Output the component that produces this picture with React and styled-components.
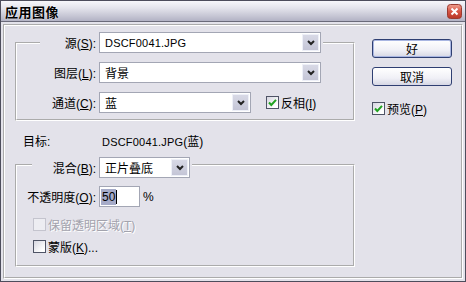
import React from 'react'
import styled, { createGlobalStyle } from 'styled-components'

const GlobalStyle = createGlobalStyle`
  html, body { margin: 0; padding: 0; background: #fff; }
  body {
    font-family: "Liberation Sans", "Noto Sans CJK SC", sans-serif;
    font-size: 12px;
    color: #000;
  }
`

const Window = styled.div`
  box-sizing: border-box;
  width: 466px;
  height: 282px;
  display: flex;
  flex-direction: column;
  background: #e3e2ea;
  border: 1px solid #4d4d5c;
`

const TitleBar = styled.div`
  height: 20px;
  flex: none;
  display: flex;
  align-items: center;
  justify-content: space-between;
  padding: 0 3px 0 4px;
  background: linear-gradient(#f7f7fb, #e4e4ec 35%, #c6c6d4 75%, #b2b2c4);
  border-bottom: 1px solid #6a6a7a;
`

const Title = styled.div`
  font-family: "Noto Sans CJK SC", sans-serif;
  font-size: 13px;
  font-weight: bold;
  letter-spacing: 0.5px;
  text-shadow: 0 0 2px #fff;
`

const Client = styled.div`
  flex: 1;
  display: flex;
  padding: 2px;
`

const Frame = styled.div`
  flex: 1;
  border: 2px groove #fff;
  display: grid;
  grid-template-columns: 340px 80px;
  column-gap: 17px;
  align-items: start;
  padding: 6px 0 0 10px;
`

const LeftCol = styled.div`
  display: flex;
  flex-direction: column;
`

const RightCol = styled.div`
  display: flex;
  flex-direction: column;
  padding-top: 7px;
`

const Group = styled.fieldset`
  box-sizing: border-box;
  width: 340px;
  margin: ${p => p.mt || 0}px 0 0 0;
  padding: ${p => p.pt}px 0 ${p => p.pb}px 0;
  min-width: 0;
  border: 2px groove #fff;
  display: flex;
  flex-direction: column;
`

const Legend = styled.legend`
  margin-left: ${p => p.ml}px;
  padding: ${p => p.pt || 0}px 2px 0 0;
  display: flex;
  align-items: center;
`

const Row = styled.div`
  display: flex;
  align-items: center;
  height: ${p => p.h || 21}px;
  margin-top: ${p => p.mt || 0}px;
  padding-left: ${p => p.pl || 0}px;
`

const Label = styled.label`
  width: ${p => p.w}px;
  margin-right: 3px;
  text-align: ${p => p.left ? 'left' : 'right'};
  white-space: nowrap;
  flex: none;
`

const Select = styled.div`
  box-sizing: border-box;
  width: ${p => p.w}px;
  height: 21px;
  flex: none;
  display: flex;
  background: #fff;
  border: 1px solid #a3a6b4;
`

const SelectValue = styled.div`
  flex: 1;
  display: flex;
  align-items: center;
  padding-left: 5px;
  white-space: nowrap;
`

const Latin = styled.span`
  font-size: 11px;
  letter-spacing: 0.2px;
`

const ArrowBtn = styled.div`
  box-sizing: border-box;
  width: 17px;
  margin: 1px;
  display: flex;
  align-items: center;
  justify-content: center;
  background: linear-gradient(#d8d9e6, #c4c5d6);
  border: 1px solid #eef0f8;
`

const Button = styled.button`
  box-sizing: border-box;
  width: 80px;
  height: 19px;
  margin-bottom: 9px;
  padding: 0;
  border: 1px solid #2f3f72;
  border-radius: 3px;
  background: linear-gradient(#ffffff, #f0f0f6 60%, #d6d7e4);
  box-shadow: ${p => p.primary ? 'inset 0 0 0 1px #a9b6e2' : 'none'};
  font-family: "Noto Sans CJK SC", sans-serif;
  font-size: 12px;
  line-height: 17px;
  color: #000;
`

const CheckRow = styled.div`
  display: flex;
  align-items: center;
  height: ${p => p.h || 21}px;
  margin-top: ${p => p.mt || 0}px;
  margin-left: ${p => p.ml || 0}px;
  padding-left: ${p => p.pl || 0}px;
  color: ${p => p.disabled ? '#a3a3ad' : '#000'};
  text-shadow: ${p => p.disabled ? '1px 1px 0 #fff' : 'none'};
`

const Box = styled.span`
  box-sizing: border-box;
  width: 13px;
  height: 13px;
  flex: none;
  margin-right: 2px;
  display: flex;
  align-items: center;
  justify-content: center;
  border: 1px solid ${p => p.disabled ? '#c4c4ce' : '#4f5466'};
  background: ${p => p.disabled ? '#ededf2' : 'linear-gradient(135deg, #d6d6e0, #ffffff 80%)'};
`

const TargetRow = styled.div`
  display: flex;
  align-items: center;
  height: 14px;
  margin-top: 12px;
  padding-left: 8px;
`

const Field = styled.div`
  box-sizing: border-box;
  width: 41px;
  height: 21px;
  flex: none;
  display: flex;
  align-items: center;
  background: #fff;
  border: 1px solid #a3a6b4;
  padding-left: 1px;
`

const Selected = styled.span`
  background: #a6abc8;
  padding: 1px 1px;
  line-height: 14px;
`

const Caret = styled.span`
  width: 1px;
  height: 14px;
  background: #000;
`

const Unit = styled.span`
  margin-left: 3px;
`

const Chevron = () => (
  <svg width="8" height="6" viewBox="0 0 8 6">
    <path d="M1 1 L4 4 L7 1" fill="none" stroke="#222" strokeWidth="2" />
  </svg>
)

const Check = () => (
  <svg width="11" height="11" viewBox="0 0 11 11">
    <path d="M2 5.5 L4.3 8 L9 2.8" fill="none" stroke="#21a321" strokeWidth="2" />
  </svg>
)

const CloseIcon = () => (
  <svg width="15" height="15" viewBox="0 0 15 15">
    <defs>
      <linearGradient id="cl" x1="0" y1="0" x2="0" y2="1">
        <stop offset="0" stopColor="#f0a090" />
        <stop offset="0.5" stopColor="#d65545" />
        <stop offset="1" stopColor="#b83525" />
      </linearGradient>
    </defs>
    <rect x="0.5" y="0.5" width="14" height="14" rx="3" fill="url(#cl)" stroke="#9a3a30" />
    <path d="M4.5 4.5 L10.5 10.5 M10.5 4.5 L4.5 10.5" stroke="#fff" strokeWidth="2" />
  </svg>
)

const Dropdown = ({ w, children }) => (
  <Select w={w}>
    <SelectValue>{children}</SelectValue>
    <ArrowBtn><Chevron /></ArrowBtn>
  </Select>
)

const Checkbox = ({ checked, disabled, children, ...rest }) => (
  <CheckRow disabled={disabled} {...rest}>
    <Box disabled={disabled}>{checked && <Check />}</Box>
    <span>{children}</span>
  </CheckRow>
)

export default function App() {
  return (
    <>
      <GlobalStyle />
      <Window>
        <TitleBar>
          <Title>应用图像</Title>
          <CloseIcon />
        </TitleBar>
        <Client>
          <Frame>
            <LeftCol>
              <Group pt={9} pb={6}>
                <Legend ml={23}>
                  <Label w={56}>源(<u>S</u>):</Label>
                  <Dropdown w={222}><Latin>DSCF0041.JPG</Latin></Dropdown>
                </Legend>
                <Row>
                  <Label w={79}>图层(<u>L</u>):</Label>
                  <Dropdown w={222}>背景</Dropdown>
                </Row>
                <Row mt={9}>
                  <Label w={79}>通道(<u>C</u>):</Label>
                  <Dropdown w={152}>蓝</Dropdown>
                  <Checkbox checked ml={15}>反相(<u>I</u>)</Checkbox>
                </Row>
              </Group>

              <TargetRow>
                <Label w={76} left>目标:</Label>
                <span><Latin>DSCF0041.JPG</Latin>(蓝)</span>
              </TargetRow>

              <Group mt={5} pt={8} pb={11}>
                <Legend ml={15} pt={5}>
                  <Label w={64}>混合(<u>B</u>):</Label>
                  <Dropdown w={91}>正片叠底</Dropdown>
                </Legend>
                <Row>
                  <Label w={79}>不透明度(<u>O</u>):</Label>
                  <Field><Selected>50</Selected><Caret /></Field>
                  <Unit>%</Unit>
                </Row>
                <Checkbox disabled h={15} mt={10} pl={16}>保留透明区域(<u>T</u>)</Checkbox>
                <Checkbox h={15} mt={7} pl={16}>蒙版(<u>K</u>)...</Checkbox>
              </Group>
            </LeftCol>

            <RightCol>
              <Button primary>好</Button>
              <Button>取消</Button>
              <Checkbox checked mt={3}>预览(<u>P</u>)</Checkbox>
            </RightCol>
          </Frame>
        </Client>
      </Window>
    </>
  )
}
